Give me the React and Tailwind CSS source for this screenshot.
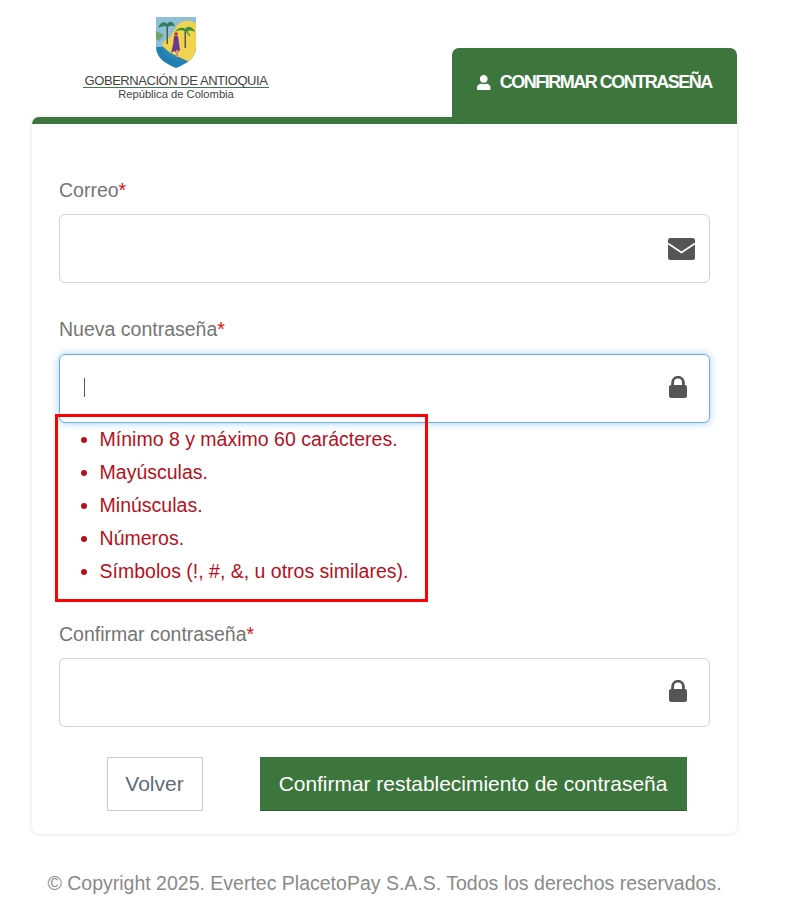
import React from "react";
import { FaUser } from "react-icons/fa";

function Shield() {
  return (
    <svg width="40" height="51" viewBox="0 0 40 51" className="block">
      <defs>
        <clipPath id="shield-clip">
          <path d="M0 0H40V30C40 41 30 47 20 51C10 47 0 41 0 30Z" />
        </clipPath>
      </defs>
      <g clipPath="url(#shield-clip)">
        <rect width="40" height="51" fill="#1f7fb0" />
        <rect width="40" height="30" fill="#8fbfd9" />
        <path d="M0 14C3 15 6 17 8 18L3 24L0 22Z" fill="#6fa56a" />
        <path d="M19 12C22 4 34 1 40 7V36L33 45L14 36L6 29L6 26L14 20Z" fill="#f0d450" />
        <path d="M6 29L14 36L33 45L32 47L12 40L5 32Z" fill="#2a86b4" />
        <rect x="10.5" y="8" width="1.5" height="19" fill="#55603a" />
        <path d="M2 11C4 5 9 4 11 7C14 3 18 5 19 10C16 8 14 9 12 10C10 9 6 9 2 11Z" fill="#2f7f5f" />
        <rect x="28.5" y="13" width="1.5" height="18" fill="#5d5a35" />
        <path d="M19 15C22 10 27 10 29 12C32 8 37 10 39 15C36 13 33 13 31 15C34 16 34 18 34 20C32 17 30 15 29 14C26 13 22 13 19 15Z" fill="#3b8f3b" />
        <circle cx="20" cy="17" r="1.8" fill="#b83232" />
        <path d="M18 19H22L23 26L24 33L21 36L18 34L15 36L17 28Z" fill="#6a3a93" />
        <path d="M20 33H22L22 40H20Z" fill="#d98f7a" />
      </g>
    </svg>
  );
}

function Lock() {
  return (
    <svg width="18" height="22" viewBox="0 0 18 22" className="block mr-[8px] -mt-[3px]">
      <path d="M3.6 10V6.6a5.4 5.4 0 0 1 10.8 0V10" fill="none" stroke="#555" strokeWidth="2.8" />
      <rect x="0" y="9" width="18" height="13" rx="2" fill="#555" />
    </svg>
  );
}

function Envelope() {
  return (
    <svg width="27" height="22" viewBox="0 0 27 22" className="block">
      <rect width="27" height="22" rx="2.5" fill="#555" />
      <path d="M0 5.5L13.5 14.5L27 5.5" fill="none" stroke="#fff" strokeWidth="1.8" />
    </svg>
  );
}

function Field({ label, icon, focused, mb, labelMb, cursor }) {
  return (
    <div className={mb}>
      <label className={"block text-[19.5px] leading-[26px] text-[#757575] " + (labelMb || "mb-[11px]")}>
        {label}
        <span className="text-[#e01010]">*</span>
      </label>
      <div
        className={
          "flex items-center justify-between h-[69px] rounded-[6px] border bg-white pl-[24px] pr-[14px] " +
          (focused
            ? "border-[#66afe9] shadow-[0_0_8px_rgba(102,175,233,0.6)]"
            : "border-[#d2d2d2]")
        }
      >
        {cursor ? <span className="block w-px h-[19px] -mt-[2px] bg-[#555]" /> : <span />}
        {icon}
      </div>
    </div>
  );
}

const rules = [
  "Mínimo 8 y máximo 60 carácteres.",
  "Mayúsculas.",
  "Minúsculas.",
  "Números.",
  "Símbolos (!, #, &, u otros similares).",
];

export default function App() {
  return (
    <div className="relative w-[805px] h-[912px] bg-white font-['Liberation_Sans',Arial,sans-serif] overflow-hidden">
      <div className="ml-[32px] w-[705px]">
        <header className="flex justify-between items-end h-[117px]">
          <div className="ml-[51px] mb-[16px] w-[186px] flex flex-col items-center self-end">
            <Shield />
            <div className="mt-[6px] w-full border-b border-[#3d7a4e] text-center text-[13px] leading-[13px] tracking-[-0.45px] text-[#444] whitespace-nowrap">
              GOBERNACIÓN DE ANTIOQUIA
            </div>
            <div className="text-[11.2px] leading-[13px] text-[#444]">República de Colombia</div>
          </div>
          <div className="flex items-center justify-center gap-[8px] w-[285px] h-[69px] pt-[1px] pb-[1px] pr-[1px] bg-[#3d763d] rounded-t-[7px] text-white">
            <FaUser className="text-[15.5px]" />
            <span className="text-[18px] font-bold tracking-[-1.5px] whitespace-nowrap">CONFIRMAR CONTRASEÑA</span>
          </div>
        </header>

        <main className="border-t-[7px] border-[#3d763d] rounded-tl-[7px] rounded-b-[8px] bg-white shadow-[0_0_4px_rgba(0,0,0,0.13)] h-[717px] px-[27px] pt-[53px]">
          <Field label="Correo" mb="mb-[33px]" icon={<Envelope />} />
          <Field label="Nueva contraseña" focused cursor mb="" labelMb="mb-[12px]" icon={<Lock />} />
          <ul className="list-disc pl-[40.6px] mb-[23px] text-[19.5px] leading-[33px] text-[#b5101e] h-[175px]">
            {rules.map((r) => (
              <li key={r}>{r}</li>
            ))}
          </ul>
          <Field label="Confirmar contraseña" mb="" icon={<Lock />} />
          <div className="flex justify-center gap-[57px] mt-[30px] pl-[24px]">
            <button className="h-[54px] w-[96px] border border-[#ccc] bg-white text-[21px] text-[#5f6b76]">Volver</button>
            <button className="h-[54px] w-[427px] bg-[#3d763d] border-b border-[#2f5f2f] text-[20.95px] text-white whitespace-nowrap">
              Confirmar restablecimiento de contraseña
            </button>
          </div>
        </main>

        <p className="mt-[36px] -mx-[10px] text-center text-[19.5px] leading-[26px] text-[#8a8a8a] whitespace-nowrap">
          © Copyright 2025. Evertec PlacetoPay S.A.S. Todos los derechos reservados.
        </p>
      </div>
      <div className="absolute left-[55px] top-[414px] w-[373px] h-[188px] border-[3px] border-[#ff0000] pointer-events-none" />
    </div>
  );
}
